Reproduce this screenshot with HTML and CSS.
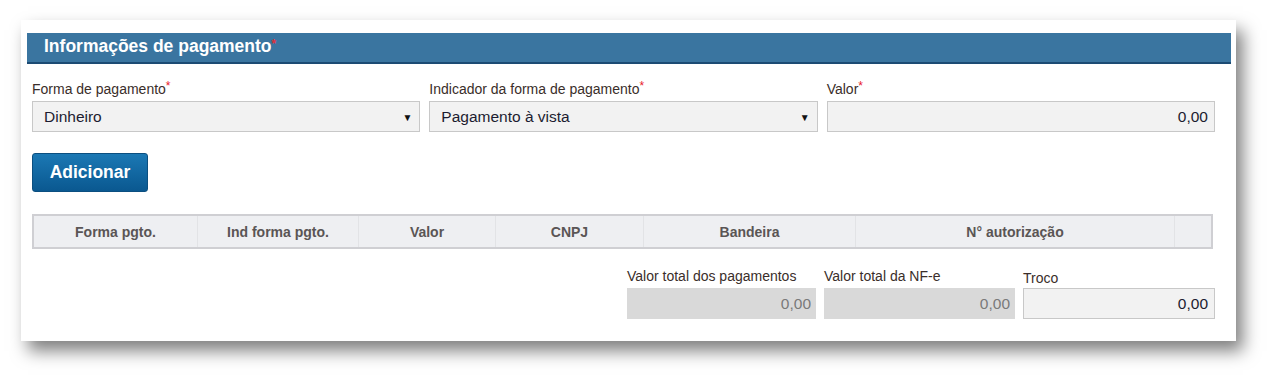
FILE: index.html
```html
<!DOCTYPE html>
<html lang="pt-BR">
<head>
    <meta charset="UTF-8">
    <title>Informações de pagamento</title>
    <link rel="stylesheet" href="styles.css">
</head>
<body>
    <div class="panel">
        <div class="panel-title">Informações de pagamento<span class="req">*</span></div>

        <div class="form">
            <div class="row">
                <div class="field">
                    <label>Forma de pagamento<span class="req">*</span></label>
                    <div class="select"><span>Dinheiro</span><span class="arrow">▼</span></div>
                </div>
                <div class="field">
                    <label>Indicador da forma de pagamento<span class="req">*</span></label>
                    <div class="select"><span>Pagamento à vista</span><span class="arrow">▼</span></div>
                </div>
                <div class="field">
                    <label>Valor<span class="req">*</span></label>
                    <div class="input">0,00</div>
                </div>
            </div>

            <button class="btn">Adicionar</button>

            <table class="grid">
                <thead>
                    <tr>
                        <th class="c1">Forma pgto.</th>
                        <th class="c2">Ind forma pgto.</th>
                        <th class="c3">Valor</th>
                        <th class="c4">CNPJ</th>
                        <th class="c5">Bandeira</th>
                        <th class="c6">N° autorização</th>
                        <th></th>
                    </tr>
                </thead>
            </table>

            <div class="totals">
                <div class="field total">
                    <label>Valor total dos pagamentos</label>
                    <div class="input disabled">0,00</div>
                </div>
                <div class="field total">
                    <label>Valor total da NF-e</label>
                    <div class="input disabled">0,00</div>
                </div>
                <div class="field total troco">
                    <label>Troco</label>
                    <div class="input">0,00</div>
                </div>
            </div>
        </div>
    </div>
</body>
</html>
```

FILE: styles.css
```css
html, body {
    min-height: 380px;
}
body {
    margin: 0;
    background: #fff;
    font-family: Arial, "Liberation Sans", sans-serif;
    color: #333;
    overflow: hidden;
}
.panel {
    margin: 20px 0 0 21px;
    width: 1215px;
    height: 321px;
    box-sizing: border-box;
    padding: 13px 5px 0 6px;
    background: #fff;
    box-shadow: 7px 10px 16px rgba(0, 0, 0, 0.5);
}
.panel-title {
    height: 29px;
    line-height: 27px;
    padding-left: 17px;
    background: #3a75a0;
    border-bottom: 2px solid #1c4b73;
    color: #fff;
    font-size: 17.5px;
    font-weight: bold;
}
.req {
    color: #e8192c;
    font-size: 12px;
    line-height: 0;
    vertical-align: 4px;
    font-weight: normal;
}
.panel-title .req {
    color: #e0303a;
    font-weight: bold;
}
.form {
    margin-left: 5px;
    width: 1183px;
    padding-top: 17px;
}
.row {
    display: flex;
    gap: 9px;
}
.field {
    display: flex;
    flex-direction: column;
    flex: 1;
}
.field label {
    font-size: 14px;
    line-height: 17px;
    margin-bottom: 3px;
    color: #3a2e2a;
}
.select, .input {
    box-sizing: border-box;
    height: 31px;
    border: 1px solid #c8c8c8;
    background: #f2f2f2;
    font-size: 15.5px;
    color: #1c1c30;
    display: flex;
    align-items: center;
}
.select {
    justify-content: space-between;
    padding: 1px 7px 0 11px;
}
.arrow {
    font-size: 10px;
    color: #111;
}
.input {
    justify-content: flex-end;
    padding-right: 6px;
}
.input.disabled {
    background: #d9d9d9;
    border-color: #d9d9d9;
    color: #7a7a7a;
    padding-right: 4px;
}
.btn {
    display: block;
    margin-top: 21px;
    width: 116px;
    height: 39px;
    border: 1px solid #0b4f80;
    border-radius: 3px;
    background: linear-gradient(#1b78b4, #0a5890);
    color: #fff;
    font-family: Arial, "Liberation Sans", sans-serif;
    font-size: 17.5px;
    font-weight: bold;
    padding: 0;
}
.grid {
    margin-top: 22px;
    width: 1181px;
    table-layout: fixed;
    border-collapse: collapse;
    border: 2px solid #cfcfd3;
    background: #eeeff2;
}
.grid th {
    height: 31px;
    padding: 0;
    font-size: 14px;
    color: #5a5555;
    border-right: 1px solid #e2e3e6;
}
.grid th:last-child {
    border-right: none;
}
.c1 { width: 163px; }
.c2 { width: 160px; }
.c3 { width: 136px; }
.c4 { width: 147px; }
.c5 { width: 211px; }
.c6 { width: 318px; }
.totals {
    display: flex;
    justify-content: flex-end;
    gap: 8px;
    margin-top: 19px;
}
.total {
    flex: none;
    width: 189px;
}
.total:nth-child(2) {
    width: 191px;
}
.total.troco {
    width: 192px;
}
.troco label {
    padding-top: 2px;
    margin-bottom: 1px;
}
```
